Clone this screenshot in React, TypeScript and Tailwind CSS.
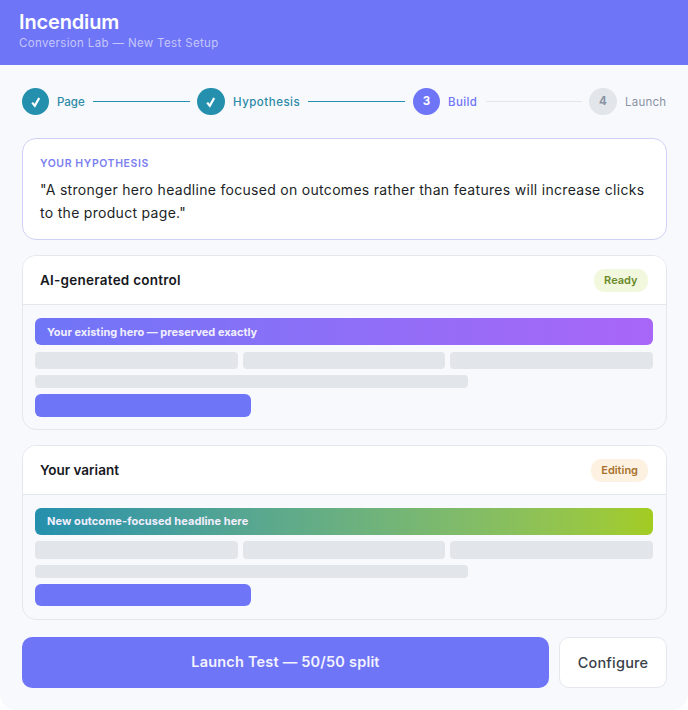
function Check() {
  return (
    <svg width="14" height="14" viewBox="0 0 14 14" fill="none">
      <path d="M3.2 7.6 L5.8 10.8 L10.2 3" stroke="#fff" strokeWidth="2.2" />
    </svg>
  );
}

function Skeleton({ title, titleClass, gradient, bodyClass }: { title: string; titleClass: string; gradient: string; bodyClass: string }) {
  return (
    <div className={`pl-3 pr-[13px] flex flex-col ${bodyClass}`}>
      <div className={`h-[27.2px] rounded-md ${gradient} flex items-center pl-3 text-[11px] font-bold text-[#f1efff] ${titleClass}`}>{title}</div>
      <div className="mt-[6.4px] flex gap-[5px]">
        <div className="h-[17.6px] flex-1 rounded bg-[#e2e5ea]" />
        <div className="h-[17.6px] flex-1 rounded bg-[#e2e5ea]" />
        <div className="h-[17.6px] flex-1 rounded bg-[#e2e5ea]" />
      </div>
      <div className="mt-[6px] h-[13px] w-[70%] rounded bg-[#e2e5ea]" />
      <div className="mt-[6px] h-[22.6px] w-[35%] rounded-md bg-[#6f75f7]" />
    </div>
  );
}

function Card({ name, nameClass, badge, badgeClass, title, titleClass, gradient, bodyClass }: { name: string; nameClass: string; badge: string; badgeClass: string; title: string; titleClass: string; gradient: string; bodyClass: string }) {
  return (
    <div className="h-[175px] rounded-[14px] border border-[#e4e7ee] overflow-hidden bg-[#f8f9fd]">
      <div className="h-[49px] bg-white border-b border-[#e4e7ee] flex items-center justify-between pl-[17px] pr-[18px]">
        <span className={`text-[13.5px] font-semibold text-[#16181d] ${nameClass}`}>{name}</span>
        <span className={`h-[23px] rounded-[10px] flex items-center text-[11px] font-semibold ${badgeClass}`}>{badge}</span>
      </div>
      <Skeleton title={title} titleClass={titleClass} gradient={gradient} bodyClass={bodyClass} />
    </div>
  );
}

export default function App() {
  return (
    <div className="w-[688px] h-[710px] bg-[#f8f9fd] font-['Inter',sans-serif] rounded-b-2xl overflow-hidden flex flex-col">
      <div className="h-[65px] bg-[#6f75f7] pl-[19px] pt-[10px] shrink-0">
        <div className="text-[20px] leading-[24px] font-semibold text-white tracking-[-0.15px]">Incendium</div>
        <div className="text-[11.5px] leading-[16px] mt-[1px] text-[#c5c7fb] tracking-[0.35px]">Conversion Lab — New Test Setup</div>
      </div>
      <div className="flex-1 pl-[22px] pr-[21px] pt-[23px] flex flex-col">
        <div className="flex items-center h-[27px]">
          <div className="w-[27px] h-[27px] rounded-full bg-[#2490ad] flex items-center justify-center shrink-0"><Check /></div>
          <span className="ml-[8px] w-[28px] pt-[2px] text-[11.5px] font-medium text-[#2b8aa6] whitespace-nowrap">Page</span>
          <div className="ml-2 w-[97px] h-px bg-[#2490ad]" />
          <div className="ml-[7px] w-[28px] h-[27px] rounded-full bg-[#2490ad] flex items-center justify-center shrink-0"><Check /></div>
          <span className="ml-[8px] w-[67px] pt-[2px] text-[11.5px] font-medium text-[#2b8aa6] tracking-[0.5px] whitespace-nowrap">Hypothesis</span>
          <div className="ml-2 w-[97px] h-px bg-[#2490ad]" />
          <div className="ml-2 w-[27px] h-[27px] rounded-full bg-[#6f75f7] flex items-center justify-center text-[11.5px] font-bold text-white shrink-0">3</div>
          <span className="ml-[8px] w-[30px] pt-[2px] text-[11.5px] font-medium text-[#6f75f7] tracking-[0.4px] whitespace-nowrap">Build</span>
          <div className="ml-2 w-[96px] h-px bg-[#e2e5ea]" />
          <div className="ml-[7px] w-[28px] h-[27px] rounded-full bg-[#e2e5ea] flex items-center justify-center text-[11.5px] font-bold text-[#8a93a3] shrink-0">4</div>
          <span className="ml-[8px] pt-[2px] text-[11.5px] text-[#8a93a3] tracking-[0.25px] whitespace-nowrap">Launch</span>
        </div>
        <div className="mt-[23px] h-[102px] rounded-[14px] border border-[#cfd1f6] bg-white pl-[17px] pr-[17px] pt-[18px]">
          <div className="text-[10.5px] leading-[14px] font-semibold tracking-[0.6px] text-[#7b80f0]">YOUR HYPOTHESIS</div>
          <div className="mt-[7px] text-[14px] leading-[23px] text-[#1c1f26] tracking-[0.3px]">"A stronger hero headline focused on outcomes rather than features will increase clicks to the product page."</div>
        </div>
        <div className="mt-[15px] flex flex-col gap-[15px]">
          <Card name="AI-generated control" nameClass="tracking-[0.25px]" badge="Ready" badgeClass="px-[10.5px] bg-[#f1f8de] text-[#6a8a2a]" title="Your existing hero — preserved exactly" titleClass="pt-[1px]" gradient="bg-gradient-to-r from-[#6f75f7] to-[#a866f7]" bodyClass="pt-[13px]" />
          <Card name="Your variant" nameClass="" badge="Editing" badgeClass="px-[10px] bg-[#fdf2e2] text-[#a8732f]" title="New outcome-focused headline here" titleClass="tracking-[0.08px]" gradient="bg-gradient-to-r from-[#2490ad] to-[#a3cc1f]" bodyClass="pt-[12.6px]" />
        </div>
        <div className="mt-[17px] flex gap-[10px] h-[51px]">
          <button className="w-[527px] rounded-[10px] bg-[#6f75f7] text-[14.5px] font-semibold text-[#f3f3ff] tracking-[0.2px] pb-[1px]">Launch Test — 50/50 split</button>
          <button className="flex-1 rounded-[10px] border border-[#e4e7ee] bg-white text-[14.5px] font-medium text-[#3a3f4a] tracking-[0.2px]">Configure</button>
        </div>
      </div>
    </div>
  );
}
